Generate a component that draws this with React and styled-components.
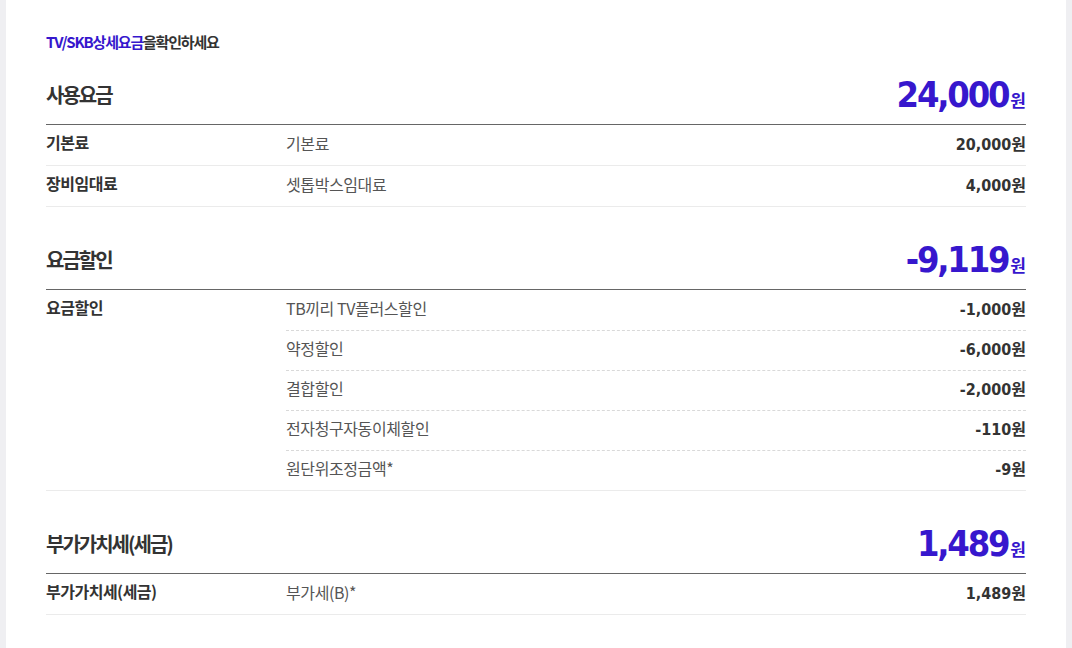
import React from "react";
import styled, { createGlobalStyle } from "styled-components";

const Global = createGlobalStyle`
  html, body { margin: 0; padding: 0; }
  body {
    background: #efeff2;
    font-family: "Noto Sans CJK KR", "Noto Sans", sans-serif;
    color: #333;
  }
`;

const BLUE = "#3617cd";
const NUM = `"DejaVu Sans Condensed", "DejaVu Sans", sans-serif`;
const KR = `"Noto Sans CJK KR", "Noto Sans", sans-serif`;

const Page = styled.div`
  margin: 0 6px;
  min-height: 648px;
  background: #fff;
  padding: 32px 40px 30px;
  box-sizing: border-box;
`;

const Intro = styled.p`
  margin: 0 0 29px;
  font-size: 15px;
  line-height: 20px;
  font-weight: 700;
  letter-spacing: -1.2px;
  color: #333;
`;

const Accent = styled.span`
  color: ${BLUE};
`;

const Section = styled.section`
  & + & { margin-top: 39px; }
`;

const Head = styled.div`
  display: flex;
  justify-content: space-between;
  align-items: flex-end;
  height: 43px;
  border-bottom: 1px solid #666;
`;

const Title = styled.h2`
  margin: 0 0 15px;
  font-size: 20px;
  line-height: 28px;
  font-weight: 700;
  letter-spacing: -2px;
  color: #333;
`;

const Total = styled.div`
  padding-bottom: 6px;
  line-height: 36px;
  color: ${BLUE};
  white-space: nowrap;
`;

const TotalNum = styled.span`
  font-family: ${NUM};
  font-stretch: condensed;
  font-size: 36px;
  font-weight: 700;
  letter-spacing: -2.2px;
`;

const Won = styled.span`
  font-family: ${KR};
  font-weight: 700;
  font-size: ${(p) => (p.$big ? "17px" : "16px")};
  letter-spacing: 0;
  margin-left: ${(p) => (p.$big ? "2px" : "0")};
`;

const Row = styled.div`
  display: grid;
  grid-template-columns: 240px 1fr;
  border-bottom: 1px solid #ebebeb;
`;

const Label = styled.div`
  font-size: 16px;
  line-height: 35px;
  padding-bottom: 5px;
  font-weight: 700;
  letter-spacing: -0.5px;
  color: #333;
`;

const Items = styled.div`
  display: flex;
  flex-direction: column;
`;

const Item = styled.div`
  display: flex;
  justify-content: space-between;
  align-items: center;
  box-sizing: border-box;
  height: 40px;
  padding-bottom: 5px;
  & + & { border-top: 1px dashed #d9d9d9; }
`;

const Desc = styled.span`
  font-size: 16px;
  font-weight: 400;
  letter-spacing: -0.4px;
  color: #555;
`;

const Amount = styled.span`
  font-family: ${NUM};
  font-stretch: condensed;
  font-size: 16px;
  font-weight: 700;
  letter-spacing: 0;
  color: #333;
  white-space: nowrap;
`;

const sections = [
  {
    title: "사용요금",
    total: "24,000",
    groups: [
      { label: "기본료", items: [["기본료", "20,000"]] },
      { label: "장비임대료", items: [["셋톱박스임대료", "4,000"]] },
    ],
  },
  {
    title: "요금할인",
    total: "-9,119",
    groups: [
      {
        label: "요금할인",
        items: [
          ["TB끼리 TV플러스할인", "-1,000"],
          ["약정할인", "-6,000"],
          ["결합할인", "-2,000"],
          ["전자청구자동이체할인", "-110"],
          ["원단위조정금액*", "-9"],
        ],
      },
    ],
  },
  {
    title: "부가가치세(세금)",
    total: "1,489",
    groups: [{ label: "부가가치세(세금)", items: [["부가세(B)*", "1,489"]] }],
  },
];

export default function App() {
  return (
    <>
      <Global />
      <Page>
        <Intro>
          <Accent>TV/SKB상세요금</Accent>을확인하세요
        </Intro>
        {sections.map((s) => (
          <Section key={s.title}>
            <Head>
              <Title>{s.title}</Title>
              <Total>
                <TotalNum>{s.total}</TotalNum>
                <Won $big>원</Won>
              </Total>
            </Head>
            {s.groups.map((g) => (
              <Row key={g.label}>
                <Label>{g.label}</Label>
                <Items>
                  {g.items.map(([d, a]) => (
                    <Item key={d}>
                      <Desc>{d}</Desc>
                      <Amount>
                        {a}
                        <Won>원</Won>
                      </Amount>
                    </Item>
                  ))}
                </Items>
              </Row>
            ))}
          </Section>
        ))}
      </Page>
    </>
  );
}
